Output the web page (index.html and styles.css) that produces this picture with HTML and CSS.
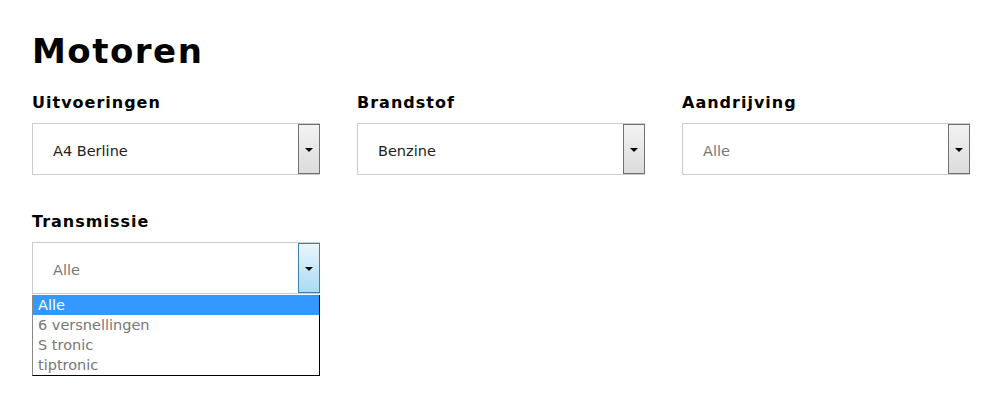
FILE: index.html
```html
<!DOCTYPE html>
<html lang="nl">
<head>
  <meta charset="UTF-8">
  <title>Motoren</title>
  <link rel="stylesheet" href="styles.css">
</head>
<body>

  <h1>Motoren</h1>

  <div class="filters">
    <div class="field">
      <label>Uitvoeringen</label>
      <div class="select">
        <span class="value">A4 Berline</span>
        <span class="arrow"></span>
      </div>
    </div>

    <div class="field">
      <label>Brandstof</label>
      <div class="select">
        <span class="value">Benzine</span>
        <span class="arrow"></span>
      </div>
    </div>

    <div class="field">
      <label>Aandrijving</label>
      <div class="select">
        <span class="value empty">Alle</span>
        <span class="arrow"></span>
      </div>
    </div>

    <div class="field">
      <label>Transmissie</label>
      <div class="select open">
        <span class="value empty">Alle</span>
        <span class="arrow"></span>
      </div>
      <div class="options">
        <div class="option selected">Alle</div>
        <div class="option">6 versnellingen</div>
        <div class="option">S tronic</div>
        <div class="option">tiptronic</div>
      </div>
    </div>
  </div>

</body>
</html>
```

FILE: styles.css
```css
body { margin: 0; padding: 31px 32px 0; background: #fff; font-family: "DejaVu Sans", Verdana, sans-serif; color: #000; }
h1 { margin: 0 0 22px; font-size: 34px; line-height: 40px; letter-spacing: 1.5px; font-weight: bold; }
.filters { display: grid; grid-template-columns: repeat(3, 288px); column-gap: 37px; row-gap: 37px; align-items: start; }
label { display: block; font-size: 16px; line-height: 20px; font-weight: bold; letter-spacing: 1px; margin-bottom: 10px; }
.select { display: flex; height: 50px; border: 1px solid #ccc; background: #fff; }
.value { flex: 1; padding: 4px 0 0 20px; display: flex; align-items: center; font-size: 14.5px; color: #222; }
.value.empty { color: #777; }
.arrow { width: 20px; border: 1px solid #707070; background: linear-gradient(#f3f3f3, #dcdcdc); display: flex; align-items: center; justify-content: center; margin-right: -1px; }
.arrow::after { content: ""; border-left: 4px solid transparent; border-right: 4px solid transparent; border-top: 4px solid #000; margin-top: 2px; }
.open .arrow { border-color: #3c7fb1; background: linear-gradient(#eaf6fd, #a9dbf6); }
.options { width: 286px; margin-top: 1px; background: #fff; border-left: 1px solid #888; border-right: 1px solid #000; border-bottom: 1px solid #000; }
.option { height: 20px; line-height: 20px; padding-left: 5px; font-size: 14.5px; color: #777; }
.option.selected { background: #3399ff; color: #fff; }
```
